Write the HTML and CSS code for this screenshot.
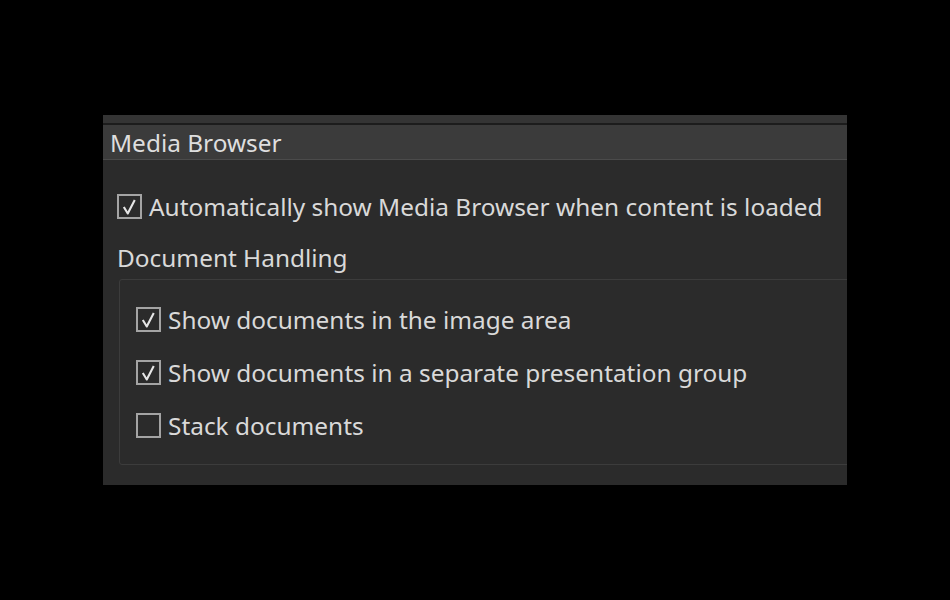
FILE: index.html
```html
<!DOCTYPE html>
<html>
<head>
<meta charset="utf-8">
<link rel="stylesheet" href="styles.css">
</head>
<body>
<div class="panel">
  <div class="strip"></div>
  <div class="header">Media Browser</div>
  <div class="body">
    <label class="check top">
      <span class="box"><svg viewBox="0 0 24 24" width="24" height="24"><path d="M5.5 12.5 L10 20 L18 4.5" fill="none" stroke="#e6e6e6" stroke-width="2.4" stroke-linejoin="round"/></svg></span>
      <span class="txt">Automatically show Media Browser when content is loaded</span>
    </label>
    <div class="grouptitle">Document Handling</div>
    <div class="group">
      <label class="check">
        <span class="box"><svg viewBox="0 0 24 24" width="24" height="24"><path d="M5.5 12.5 L10 20 L18 4.5" fill="none" stroke="#e6e6e6" stroke-width="2.4" stroke-linejoin="round"/></svg></span>
        <span class="txt">Show documents in the image area</span>
      </label>
      <label class="check">
        <span class="box"><svg viewBox="0 0 24 24" width="24" height="24"><path d="M5.5 12.5 L10 20 L18 4.5" fill="none" stroke="#e6e6e6" stroke-width="2.4" stroke-linejoin="round"/></svg></span>
        <span class="txt">Show documents in a separate presentation group</span>
      </label>
      <label class="check">
        <span class="box"></span>
        <span class="txt">Stack documents</span>
      </label>
    </div>
  </div>
</div>
</body>
</html>
```
FILE: styles.css
```css
html, body {
  margin: 0;
  padding: 0;
  background: #000;
}
body {
  width: 950px;
  height: 600px;
  overflow: hidden;
  font-family: "Noto Sans", "Open Sans", sans-serif;
  color: #d9d9d9;
}
.panel {
  margin: 115px 0 0 103px;
  width: 744px;
  height: 370px;
  background: #2b2b2b;
  overflow: hidden;
  display: flex;
  flex-direction: column;
}
.strip {
  height: 8px;
  background: #343434;
  border-bottom: 2px solid #1c1c1c;
}
.header {
  height: 34px;
  background: #3b3b3b;
  border-bottom: 1px solid #4b4b4b;
  font-size: 24.4px;
  line-height: 36px;
  padding-left: 7px;
  color: #dedede;
}
.body {
  flex: 1;
  padding: 33px 0 0 14px;
}
.check {
  display: flex;
  align-items: center;
  height: 26px;
  font-size: 24.4px;
  gap: 7px;
}
.box {
  width: 21px;
  height: 21px;
  border: 2px solid #a4a4a4;
  display: flex;
  align-items: center;
  justify-content: center;
  flex-shrink: 0;
}
.box svg {
  width: 21px;
  height: 21px;
}
.top {
  margin-bottom: 26px;
}
.grouptitle {
  font-size: 24.4px;
  line-height: 26px;
  margin-left: 0;
}
.group {
  margin: 8px 0 0 2px;
  width: 800px;
  height: 186px;
  border: 1px solid #3c3c3c;
  border-radius: 3px;
  box-sizing: border-box;
  padding: 26px 0 0 16px;
  display: flex;
  flex-direction: column;
  gap: 27px;
}
```
